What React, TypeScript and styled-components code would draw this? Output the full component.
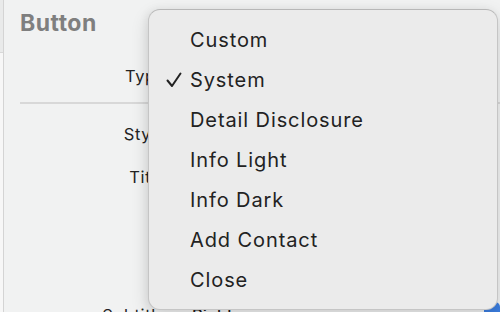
import styled, { createGlobalStyle } from 'styled-components';

const GlobalStyle = createGlobalStyle`
  html, body {
    margin: 0;
    padding: 0;
    background: #f1f2f2;
  }
  body {
    font-family: Inter, "Noto Sans", sans-serif;
    -webkit-font-smoothing: antialiased;
  }
`;

const Page = styled.div`
  position: relative;
  width: 500px;
  height: 312px;
  overflow: hidden;
  display: flex;
  background: #f1f2f2;
`;

const Gutter = styled.div`
  width: 3px;
  flex-shrink: 0;
  display: flex;
  flex-direction: column;
  border-right: 1px solid #d4d4d4;
`;

const GutterPart = styled.div<{ $h?: number; $bg: string }>`
  height: ${({ $h }) => ($h ? `${$h}px` : 'auto')};
  flex: ${({ $h }) => ($h ? '0 0 auto' : '1')};
  background: ${({ $bg }) => $bg};
  border-bottom: ${({ $h }) => ($h ? '1px solid #d8d8d8' : 'none')};
`;

const Inspector = styled.div`
  flex: 1;
  display: flex;
  flex-direction: column;
  padding-left: 16px;
`;

const Header = styled.h2`
  margin: 0;
  height: 46px;
  line-height: 46px;
  font-size: 23px;
  font-weight: 700;
  letter-spacing: 0.5px;
  color: #7f7f7f;
`;

const Row = styled.div<{ $h: number; $top?: number }>`
  display: flex;
  align-items: center;
  height: ${({ $h }) => `${$h}px`};
  margin-top: ${({ $top }) => `${$top ?? 0}px`};
  flex-shrink: 0;
`;

const Label = styled.span`
  width: 146px;
  text-align: right;
  font-size: 16.5px;
  letter-spacing: 0.6px;
  color: #232323;
`;

const Value = styled.span`
  margin-left: 26px;
  font-size: 16.5px;
  color: #1a1a1a;
  font-weight: 500;
`;

const Spacer = styled.div<{ $h: number }>`
  height: ${({ $h }) => `${$h}px`};
  flex-shrink: 0;
`;

const Separator = styled.div`
  height: 2px;
  background: #d8d8d8;
  flex-shrink: 0;
`;

const BlueTab = styled.div`
  margin-left: auto;
  width: 16px;
  height: 26px;
  border-radius: 5px;
  background: #3b7ddf;
`;

const Menu = styled.ul`
  position: absolute;
  left: 148px;
  top: 9px;
  width: 350px;
  height: 301px;
  box-sizing: border-box;
  margin: 0;
  padding: 10px 0 0;
  list-style: none;
  background: #ebebeb;
  border: 1px solid rgba(0, 0, 0, 0.16);
  border-top-color: rgba(0, 0, 0, 0.22);
  border-radius: 12px;
  box-shadow: 0 6px 18px rgba(0, 0, 0, 0.14), -2px 0 8px rgba(0, 0, 0, 0.05);
`;

const Item = styled.li`
  position: relative;
  height: 40px;
  line-height: 40px;
  padding-left: 41px;
  font-size: 20px;
  letter-spacing: 0.9px;
  color: #222;
  white-space: nowrap;
`;

const Check = styled.svg`
  position: absolute;
  left: 17px;
  top: 12px;
`;

const items = ['Custom', 'System', 'Detail Disclosure', 'Info Light', 'Info Dark', 'Add Contact', 'Close'];

export default function App() {
  return (
    <>
      <GlobalStyle />
      <Page>
        <Gutter>
          <GutterPart $h={52} $bg="#e9eaea" />
          <GutterPart $bg="#f7f7f7" />
        </Gutter>
        <Inspector>
          <Header>Button</Header>
          <Row $h={52} $top={4}>
            <Label>Type</Label>
          </Row>
          <Separator />
          <Row $h={60}>
            <Label>Style</Label>
          </Row>
          <Row $h={26}>
            <Label>Title</Label>
          </Row>
          <Spacer $h={112} />
          <Row $h={26}>
            <Label>Subtitle</Label>
            <Value>Right</Value>
            <BlueTab />
          </Row>
        </Inspector>
        <Menu>
          {items.map((name) => (
            <Item key={name}>
              {name === 'System' && (
                <Check width="16" height="16" viewBox="0 0 16 16">
                  <path d="M1.5 8.5 L6 14 L14.5 1.5" fill="none" stroke="#222" strokeWidth="2" strokeLinecap="round" strokeLinejoin="round" />
                </Check>
              )}
              {name}
            </Item>
          ))}
        </Menu>
      </Page>
    </>
  );
}
